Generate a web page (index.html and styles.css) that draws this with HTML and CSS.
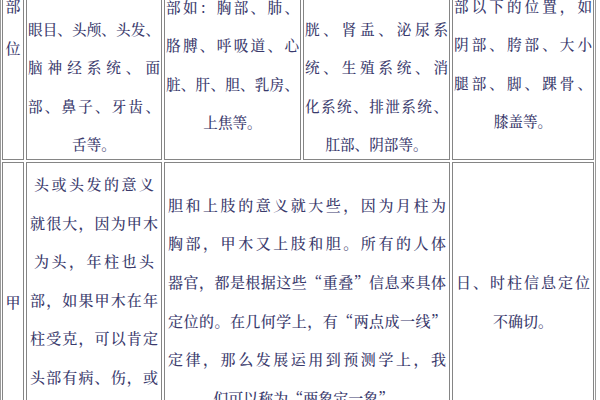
FILE: index.html
```html
<!DOCTYPE html>
<html lang="zh-CN">
<head>
<meta charset="utf-8">
<title>部位表</title>
<link rel="stylesheet" href="styles.css">
</head>
<body>
<div class="sheet">
  <div class="cell lbl top-e">
    <span class="ch">部</span>
    <span class="ch">位</span>
  </div>
  <div class="cell r1 top-b">
    <span class="ln">眼目、头颅、头发、</span>
    <span class="ln">脑神经系统、面</span>
    <span class="ln">部、鼻子、牙齿、</span>
    <span class="ln end">舌等。</span>
  </div>
  <div class="cell r1 top-a">
    <span class="ln">部如：胸部、肺、</span>
    <span class="ln">胳膊、呼吸道、心</span>
    <span class="ln">脏、肝、胆、乳房、</span>
    <span class="ln end">上焦等。</span>
  </div>
  <div class="cell r1 top-b">
    <span class="ln">胱、肾盂、泌尿系</span>
    <span class="ln">统、生殖系统、消</span>
    <span class="ln">化系统、排泄系统、</span>
    <span class="ln end">肛部、阴部等。</span>
  </div>
  <div class="cell r1 top-c">
    <span class="ln">部以下的位置，如</span>
    <span class="ln">阴部、胯部、大小</span>
    <span class="ln">腿部、脚、踝骨、</span>
    <span class="ln end">膝盖等。</span>
  </div>

  <div class="cell lbl mid">
    <span class="ch">甲</span>
  </div>
  <div class="cell r2 top-d">
    <span class="ln inset">头或头发的意义</span>
    <span class="ln">就很大，因为甲木</span>
    <span class="ln inset">为头，年柱也头</span>
    <span class="ln">部，如果甲木在年</span>
    <span class="ln">柱受克，可以肯定</span>
    <span class="ln">头部有病、伤，或</span>
  </div>
  <div class="cell r2 wide mid">
    <span class="ln">胆和上肢的意义就大些，因为月柱为</span>
    <span class="ln">胸部，甲木又上肢和胆。所有的人体</span>
    <span class="ln">器官，都是根据这些“重叠”信息来具体</span>
    <span class="ln">定位的。在几何学上，有“两点成一线”</span>
    <span class="ln">定律，那么发展运用到预测学上，我</span>
    <span class="ln end">们可以称为“两象定一象”。</span>
  </div>
  <div class="cell r2 mid">
    <span class="ln">日、时柱信息定位</span>
    <span class="ln end">不确切。</span>
  </div>
</div>
</body>
</html>
```

FILE: styles.css
```css
html, body {
  margin: 0;
  padding: 0;
  background: #ffffff;
}

body {
  font-family: "Noto Serif CJK SC", "Noto Sans CJK SC", serif;
  font-weight: 500;
  color: #3a3a6c;
  overflow: hidden;
}

.sheet {
  display: grid;
  grid-template-columns: 22px 136px 137px 147px 142px;
  grid-template-rows: 188px 279px;
  gap: 2px;
  padding: 1px;
  border: 1px solid #9a9a9a;
  margin-top: -30px;
  width: max-content;
}

.cell {
  box-sizing: border-box;
  border: 1px solid #858585;
  display: flex;
  flex-direction: column;
  min-width: 0;
}

.cell.wide {
  grid-column: span 2;
}

.r1 {
  font-size: 14.6px;
  line-height: 38.3px;
  padding-left: 1px;
  padding-right: 1px;
}

.r2 {
  font-size: 15px;
  line-height: 38.6px;
  padding-left: 3px;
  padding-right: 3px;
}

.lbl {
  align-items: center;
  font-size: 15px;
  line-height: 42px;
}

.top-a { padding-top: 15px; }
.top-b { padding-top: 37px; }
.top-c { padding-top: 14px; }
.top-d { padding-top: 2px; }
.top-e { padding-top: 12px; }

.mid {
  justify-content: center;
}

.ch {
  display: block;
}

.ln {
  display: block;
  white-space: nowrap;
  text-align: justify;
  text-align-last: justify;
}

.ln.inset {
  padding: 0 4px;
}

.ln.end {
  text-align: center;
  text-align-last: center;
}
```
